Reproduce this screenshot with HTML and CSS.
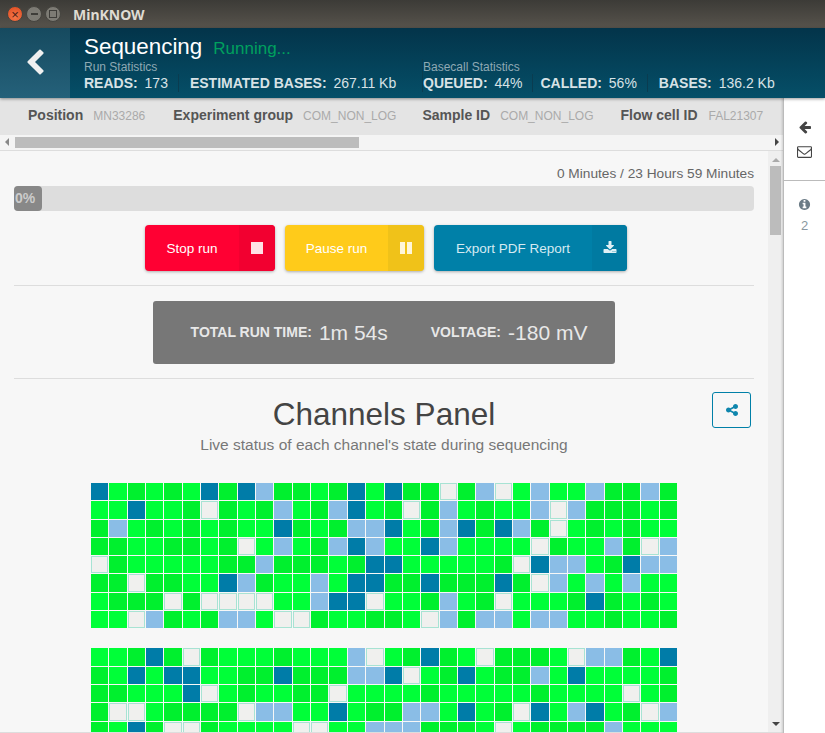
FILE: index.html
```html
<!DOCTYPE html>
<html lang="en">

<head>
    <meta charset="UTF-8">
    <meta name="viewport" content="width=device-width, initial-scale=1.0">
    <title>MinKNOW</title>
    <link rel="stylesheet" href="styles.css">
</head>

<body>

    <div class="titlebar">
        <span class="win-btn win-close">&#215;</span>
        <span class="win-btn win-min"><i class="min-mark"></i></span>
        <span class="win-btn win-max"><i class="max-mark"></i></span>
        <span class="win-title">MinKNOW</span>
    </div>

    <header class="header">
        <a class="back">
            <svg class="back-icon" viewBox="0 0 1792 1792"><path d="M1427 301l-531 531 531 531q19 19 19 45t-19 45l-166 166q-19 19-45 19t-45-19l-742-742q-19-19-19-45t19-45l742-742q19-19 45-19t45 19l166 166q19 19 19 45t-19 45z"/></svg>
        </a>
        <div class="header-body">
            <div class="heading">
                <span class="heading-title">Sequencing</span>
                <span class="heading-state">Running...</span>
            </div>
            <div class="stat-groups">
                <div class="stat-group group-run">
                    <div class="group-label">Run Statistics</div>
                    <div class="stats">
                        <span class="stat"><b>READS:</b> 173</span>
                        <span class="stat"><b>ESTIMATED BASES:</b> 267.11 Kb</span>
                    </div>
                </div>
                <div class="stat-group">
                    <div class="group-label">Basecall Statistics</div>
                    <div class="stats">
                        <span class="stat stat-queued"><b>QUEUED:</b> 44%</span>
                        <span class="stat"><b>CALLED:</b> 56%</span>
                        <span class="stat"><b>BASES:</b> 136.2 Kb</span>
                    </div>
                </div>
            </div>
        </div>
    </header>

    <div class="workspace">
        <div class="main">
            <div class="info-strip">
                <span class="info-item item-position"><b>Position</b><em>MN33286</em></span>
                <span class="info-item item-group"><b>Experiment group</b><em>COM_NON_LOG</em></span>
                <span class="info-item item-sample"><b>Sample ID</b><em>COM_NON_LOG</em></span>
                <span class="info-item item-cell"><b>Flow cell ID</b><em>FAL21307</em></span>
            </div>
            <div class="hscroll">
                <i class="arrow arrow-left"></i>
                <div class="hscroll-thumb"></div>
                <i class="arrow arrow-right"></i>
            </div>

            <div class="scroll-area">
                <div class="content">
                    <div class="elapsed">0 Minutes / 23 Hours 59 Minutes</div>
                    <div class="progress"><div class="progress-fill">0%</div></div>

                    <div class="actions">
                        <a class="action action-stop">
                            <span class="action-text">Stop run</span>
                            <span class="action-icon"><i class="stop-mark"></i></span>
                        </a>
                        <a class="action action-pause">
                            <span class="action-text">Pause run</span>
                            <span class="action-icon"><i class="pause-mark"></i><i class="pause-mark"></i></span>
                        </a>
                        <a class="action action-export">
                            <span class="action-text">Export PDF Report</span>
                            <span class="action-icon">
                                <svg class="export-icon" viewBox="0 0 1792 1792"><path d="M1344 1344q0-26-19-45t-45-19-45 19-19 45 19 45 45 19 45-19 19-45zm256 0q0-26-19-45t-45-19-45 19-19 45 19 45 45 19 45-19 19-45zm128-224v320q0 40-28 68t-68 28h-1472q-40 0-68-28t-28-68v-320q0-40 28-68t68-28h465l135 136q58 56 136 56t136-56l136-136h464q40 0 68 28t28 68zm-325-569q17 41-14 70l-448 448q-18 19-45 19t-45-19l-448-448q-31-29-14-70 17-39 59-39h256v-448q0-26 19-45t45-19h256q26 0 45 19t19 45v448h256q42 0 59 39z"/></svg>
                            </span>
                        </a>
                    </div>

                    <hr class="rule">

                    <div class="run-panel">
                        <span class="run-item"><b>TOTAL RUN TIME:</b> <span class="run-value">1m 54s</span></span>
                        <span class="run-item"><b>VOLTAGE:</b> <span class="run-value">-180 mV</span></span>
                    </div>

                    <hr class="rule rule-tight">

                    <div class="channels-head">
                        <h1>Channels Panel</h1>
                        <p>Live status of each channel's state during sequencing</p>
                        <a class="share">
                            <svg class="share-icon" viewBox="0 0 1792 1792"><path d="M1344 1024q133 0 226.5 93.5t93.5 226.5-93.5 226.5-226.5 93.5-226.5-93.5-93.5-226.5q0-12 2-34l-360-180q-92 86-218 86-133 0-226.5-93.5t-93.5-226.5 93.5-226.5 226.5-93.5q126 0 218 86l360-180q-2-22-2-34 0-133 93.5-226.5t226.5-93.5 226.5 93.5 93.5 226.5-93.5 226.5-226.5 93.5q-126 0-218-86l-360 180q2 22 2 34t-2 34l360 180q92-86 218-86z"/></svg>
                        </a>
                    </div>

                    <div id="channels"></div>
                </div>
                <div class="vscroll">
                    <i class="arrow arrow-up"></i>
                    <div class="vscroll-thumb"></div>
                    <i class="arrow arrow-down"></i>
                </div>
            </div>
        </div>

        <aside class="sidebar">
            <div class="side-top">
                <svg class="side-arrow" viewBox="0 0 1792 1792"><path d="M1664 896v128q0 53-32.5 90.5t-84.5 37.5h-704l293 294q38 36 38 90t-38 90l-75 76q-37 37-90 37-52 0-91-37l-651-652q-37-37-37-90 0-52 37-91l651-650q38-38 91-38 52 0 90 38l75 74q38 38 38 91t-38 91l-293 293h704q52 0 84.5 37.5t32.5 90.5z"/></svg>
                <svg class="side-mail" viewBox="0 0 1792 1792"><path d="M1664 1504v-768q-32 36-69 66-268 206-426 338-51 43-83 67t-86.5 48.5-102.5 24.5h-2q-48 0-102.5-24.5t-86.5-48.5-83-67q-158-132-426-338-37-30-69-66v768q0 13 9.5 22.5t22.5 9.5h1472q13 0 22.5-9.5t9.5-22.5zm0-1051v-24.5l-.5-13-3-12.5-5.5-9-9-7.5-14-2.5h-1472q-13 0-22.5 9.5t-9.5 22.5q0 168 147 284 193 152 401 317 6 5 35 29.5t46 37.5 44.5 31.5 50.5 27.5 43 9h2q20 0 43-9t50.5-27.5 44.5-31.5 46-37.5 35-29.5q208-165 401-317 54-43 100.5-115.5t46.5-131.5zm128-37v1088q0 66-47 113t-113 47h-1472q-66 0-113-47t-47-113v-1088q0-66 47-113t113-47h1472q66 0 113 47t47 113z"/></svg>
            </div>
            <div class="side-info">
                <svg class="side-circle" viewBox="0 0 1792 1792"><path d="M1152 1376v-160q0-14-9-23t-23-9h-96v-512q0-14-9-23t-23-9h-320q-14 0-23 9t-9 23v160q0 14 9 23t23 9h96v320h-96q-14 0-23 9t-9 23v160q0 14 9 23t23 9h448q14 0 23-9t9-23zm-128-896v-160q0-14-9-23t-23-9h-192q-14 0-23 9t-9 23v160q0 14 9 23t23 9h192q14 0 23-9t9-23zm640 416q0 209-103 385.5t-279.5 279.5-385.5 103-385.5-103-279.5-279.5-103-385.5 103-385.5 279.5-279.5 385.5-103 385.5 103 279.5 279.5 103 385.5z"/></svg>
                <span class="side-count">2</span>
            </div>
        </aside>
    </div>

    <script src="script.js"></script>

</body>

</html>
```

FILE: styles.css
```css
* {
    box-sizing: border-box;
}

html,
body {
    height: 100%;
}

body {
    margin: 0;
    display: flex;
    flex-direction: column;
    overflow: hidden;
    background: #f7f7f7;
    color: #555;
    font-family: 'Liberation Sans', Arial, sans-serif;
}

/* window chrome */
.titlebar {
    height: 28px;
    flex: none;
    display: flex;
    align-items: center;
    padding-left: 7px;
    background: linear-gradient(#3c3b37, #57534c);
}

.win-btn {
    width: 16px;
    height: 16px;
    margin-right: 3px;
    border-radius: 50%;
    display: flex;
    align-items: center;
    justify-content: center;
    background: #7d7b74;
    border: 1px solid #45443f;
}

.win-close {
    background: radial-gradient(circle at 50% 70%, #f5774a, #de4a1e);
    color: #4a2015;
    font-size: 13px;
    line-height: 1;
}

.min-mark {
    width: 7px;
    height: 2px;
    background: #3e3d39;
}

.max-mark {
    width: 8px;
    height: 8px;
    border: 1px solid #3e3d39;
}

.win-title {
    margin-left: 9px;
    color: #dfdbd2;
    font: bold 14px 'Noto Sans', sans-serif;
}

/* header */
.header {
    height: 70px;
    flex: none;
    display: flex;
    position: relative;
    z-index: 2;
    background: linear-gradient(#03344a, #054f68);
    box-shadow: 0 1px 3px rgba(0, 0, 0, 0.4);
}

.back {
    width: 70px;
    display: flex;
    align-items: center;
    justify-content: center;
    background: linear-gradient(#164a5f, #25617a);
}

.back-icon {
    width: 28px;
    height: 28px;
    fill: #f0f0f0;
}

.header-body {
    padding: 6px 0 0 14px;
}

.heading {
    display: flex;
    align-items: baseline;
    height: 25px;
}

.heading-title {
    color: #fff;
    font-size: 22.4px;
}

.heading-state {
    margin-left: 11px;
    color: #00a05e;
    font-size: 17px;
}

.stat-groups {
    display: flex;
}

.group-run {
    width: 339px;
    border-right: 1px solid #0a3c50;
}

.group-label {
    color: #8fa9b4;
    font-size: 12px;
    line-height: 14px;
    margin-top: 1px;
}

.stats {
    display: flex;
    height: 18px;
    align-items: center;
}

.stat {
    padding-right: 10px;
    margin-right: 11px;
    border-right: 1px solid #0a3c50;
    color: #d8e2e6;
    font-size: 14px;
    line-height: 18px;
    white-space: nowrap;
}

.stat b {
    margin-right: 3px;
}

.stat-queued {
    margin-right: 7px;
}

.stat:last-child {
    border-right: none;
}

.group-run .stat:last-child {
    margin-right: 0;
}

/* workspace */
.workspace {
    flex: 1;
    min-height: 0;
    display: flex;
}

.main {
    width: 783px;
    display: flex;
    flex-direction: column;
    min-height: 0;
}

.info-strip {
    height: 37px;
    flex: none;
    display: flex;
    align-items: center;
    padding: 0 0 4px 28px;
    background: #e4e4e4;
    font-size: 14px;
    white-space: nowrap;
}

.info-item {
    display: flex;
    align-items: baseline;
    margin-right: 27px;
}

.info-item b {
    color: #555;
    margin-right: 10px;
}

.info-item em {
    color: #aaa;
    font-size: 12px;
    font-style: normal;
}

.item-position {
    margin-right: 28px;
}

.item-group {
    margin-right: 26px;
}

.item-cell b {
    margin-right: 11px;
}

.hscroll {
    height: 16px;
    flex: none;
    display: flex;
    align-items: center;
    padding: 0 4px 1px 5px;
    background: #f4f4f4;
    border-bottom: 1px solid #ddd;
}

.hscroll-thumb {
    width: 344px;
    height: 11px;
    margin-left: 6px;
    background: #bcbcbc;
}

.arrow {
    display: block;
    width: 0;
    height: 0;
    border-style: solid;
    border-color: transparent;
}

.arrow-left {
    border-width: 4px 4px 4px 0;
    border-right-color: #888;
}

.arrow-right {
    margin-left: auto;
    border-width: 4px 0 4px 4px;
    border-left-color: #444;
}

.arrow-up {
    border-width: 0 4px 4px;
    border-bottom-color: #aaa;
}

.arrow-down {
    margin-top: auto;
    margin-bottom: 6px;
    border-width: 4px 4px 0;
    border-top-color: #444;
}

.scroll-area {
    flex: 1;
    min-height: 0;
    display: flex;
    overflow: hidden;
    border-bottom: 1px solid #ddd;
}

.content {
    width: 768px;
    flex: none;
    padding: 0 14px;
}

.vscroll {
    width: 15px;
    display: flex;
    flex-direction: column;
    align-items: center;
    padding-top: 7px;
    background: #efefef;
}

.vscroll-thumb {
    width: 11px;
    height: 69px;
    margin-top: 4px;
    background: #bcbcbc;
}

.elapsed {
    margin-top: 15px;
    height: 20px;
    color: #666;
    font-size: 13.7px;
    line-height: 16px;
    text-align: right;
}

.progress {
    height: 25px;
    background: #ddd;
    border-radius: 4px;
}

.progress-fill {
    width: 28px;
    height: 25px;
    border-radius: 4px;
    background: #888;
    color: #ccc;
    font-size: 14px;
    font-weight: bold;
    line-height: 24px;
    padding-left: 1px;
}

.actions {
    display: flex;
    justify-content: center;
    gap: 10px;
    margin-top: 14px;
    padding-left: 4px;
}

.action {
    height: 46px;
    display: flex;
    border-radius: 4px;
    overflow: hidden;
    color: #fff;
    font-size: 13.5px;
    box-shadow: 0 1px 3px rgba(0, 0, 0, 0.3);
}

.action-text {
    display: flex;
    align-items: center;
    justify-content: center;
}

.action-icon {
    display: flex;
    align-items: center;
    justify-content: center;
    gap: 2px;
    width: 36px;
}

.action-stop {
    background: #ff0033;
}

.action-stop .action-text {
    width: 94px;
}

.action-stop .action-icon {
    background: #f20030;
}

.stop-mark {
    width: 12px;
    height: 12px;
    background: #ffe0e6;
}

.action-pause {
    background: #ffcb1a;
}

.action-pause .action-text {
    width: 103px;
}

.action-pause .action-icon {
    background: #f0c219;
}

.pause-mark {
    width: 5px;
    height: 12px;
    background: #fff6d9;
}

.action-export {
    background: #0080a8;
}

.action-export .action-text {
    width: 158px;
    color: #d5eaf2;
}

.action-export .action-icon {
    width: 35px;
    background: #007aa1;
}

.export-icon {
    width: 14px;
    height: 14px;
    fill: #e0f0f5;
}

.rule {
    margin: 14px 0 15px;
    border: none;
    border-top: 1px solid #ddd;
}

.rule-tight {
    margin-bottom: 0;
}

.run-panel {
    width: 462px;
    height: 63px;
    margin: 0 auto;
    display: flex;
    align-items: center;
    justify-content: center;
    gap: 43px;
    padding-left: 10px;
    background: #777;
    border-radius: 3px;
    color: #e8e8e8;
}

.run-item {
    display: flex;
    align-items: center;
    gap: 7px;
}

.run-item b {
    font-size: 14px;
    margin-bottom: 1px;
}

.run-value {
    font-size: 21px;
}

.channels-head {
    position: relative;
    height: 104px;
    text-align: center;
}

.channels-head h1 {
    margin: 0;
    padding-top: 17px;
    color: #444;
    font-size: 31.5px;
    font-weight: normal;
    line-height: 36px;
}

.channels-head p {
    margin: 3px 0 0;
    color: #777;
    font-size: 15.5px;
    line-height: 20px;
}

.share {
    position: absolute;
    top: 13px;
    right: 3px;
    width: 39px;
    height: 36px;
    display: flex;
    align-items: center;
    justify-content: center;
    border: 1px solid #0080a8;
    border-radius: 3px;
}

.share-icon {
    width: 14px;
    height: 14px;
    fill: #0f86ad;
}

#channels {
    margin-left: 77px;
    width: 586px;
}

.block {
    display: grid;
    grid-template-columns: repeat(32, 1fr);
    gap: 1px;
    margin-bottom: 20px;
}

.cell {
    height: 17.3px;
}

.g {
    background: #00ff38;
}

.d {
    background: #00f02e;
}

.b {
    background: #007ca8;
}

.l {
    background: #8abde6;
}

.w {
    background: #f0f0ee;
    box-shadow: inset 0 0 0 1px rgba(0, 200, 150, 0.3);
}

/* right sidebar */
.sidebar {
    width: 42px;
    flex: none;
    display: flex;
    flex-direction: column;
    background: #fff;
    border-left: 1px solid #bbb;
    box-shadow: -1px 0 2px rgba(0, 0, 0, 0.15);
}

.side-top {
    height: 83px;
    display: flex;
    flex-direction: column;
    align-items: center;
    padding-top: 22px;
    border-bottom: 1px solid #bbb;
}

.side-arrow {
    width: 14px;
    height: 14px;
    fill: #444;
}

.side-mail {
    width: 15px;
    height: 15px;
    margin-top: 10px;
    fill: #444;
}

.side-info {
    display: flex;
    flex-direction: column;
    align-items: center;
    padding-top: 17px;
}

.side-circle {
    width: 13px;
    height: 13px;
    fill: #6b7b86;
}

.side-count {
    margin-top: 7px;
    color: #8a97a0;
    font-size: 13px;
}
```

FILE: script.js
```js
// channel states, one string per row of the panel
// g/d = sequencing, b = pore, l = recovering, w = inactive
var blocks = [
    [
        'bgdgdgbdblddgdbgbddwdlwglgglddld',
        'ggbggdwdgdlgdlbgdwdlgdgglwldddgd',
        'dlgdgdgdggbdgdllbgdlbdbldwgdgdgg',
        'ddggddgdwglgdlblggblggggwdggldwl',
        'wdgggggddldddgdbbgggggdwbllgdbll',
        'ddwddggbldgglgbbddbdddbdwlglglgg',
        'gdddwdwwwwgglbbwggdlgdwgggdbdgdg',
        'ggwldgdllgwwdggddgwldllgllggdggd'
    ],
    [
        'ggdbdwdgggdggglwgdbdgwdddgwlldgb',
        'dgbgbbggddbdddllbwgdbgddlgbggggd',
        'ddgggbwgdggddwggggdgggggdggggwgd',
        'dwwgddddwllggbgddllgbgdwbglbgdwl',
        'dgbdwwdggggwwggllldddgwgddddlggg'
    ]
];

var channels = document.getElementById('channels');

blocks.forEach(function (rows) {
    var block = document.createElement('div');
    block.className = 'block';
    rows.forEach(function (row) {
        for (var i = 0; i < row.length; i++) {
            var cell = document.createElement('div');
            cell.className = 'cell ' + row.charAt(i);
            block.appendChild(cell);
        }
    });
    channels.appendChild(block);
});
```
